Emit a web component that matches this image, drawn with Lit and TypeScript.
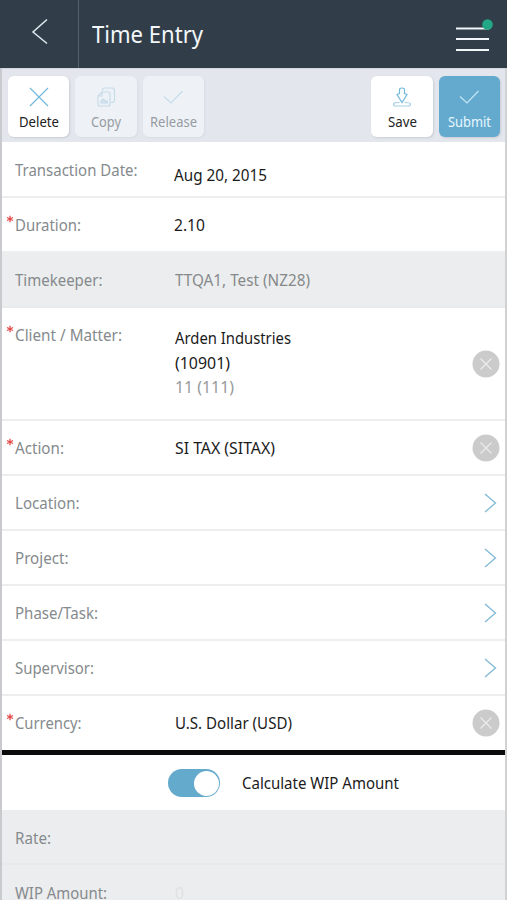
import { LitElement, html, svg, css, nothing } from "lit";
import { customElement, property } from "lit/decorators.js";

/** One line of text condensed or widened to a given width. */
@customElement("fit-text")
class FitText extends LitElement {
  @property({ type: Number }) w = 0;
  static styles = css`
    :host { display: block; white-space: nowrap; }
    .run { display: inline-block; transform-origin: 0 50%; }
  `;
  firstUpdated() {
    const run = this.renderRoot.querySelector(".run") as HTMLElement;
    const natural = run.getBoundingClientRect().width;
    if (natural && this.w) run.style.transform = `scaleX(${this.w / natural})`;
    this.style.width = `${this.w}px`;
  }
  render() {
    return html`<span class="run"><slot></slot></span>`;
  }
}

const cross = svg`<path d="M5 5 L23 23 M23 5 L5 23"/>`;
const check = svg`<path d="M5 13.500 L12 20 L23.500 8"/>`;
const copy = svg`<path d="M10.500 8 V6.500 Q10.500 5 12.500 5 H20 Q22.500 5 22.500 7.500 V17 Q22.500 19.500 20 19.500 H18.500"/><path d="M10 9 H16 Q18 9 18 11 V21 Q18 23 16 23 H8 Q6 23 6 21 V13 Z M10 9 V13 H6"/><path d="M9 20 V18 L11 16 L13 17.500 L15.500 18.500 V20 Z" fill="#d2e2ec"/>`;
const save = svg`<path d="M11.500 6.500 Q11.500 5 14 5 Q16.500 5 16.500 6.500 V10.500 L19 11.500 L14 19.500 L9 11.500 L11.500 10.500 Z"/><path d="M11.500 19.500 Q5.500 19.500 5.500 21.200 Q5.500 23 8 23 H20 Q22.500 23 22.500 21.200 Q22.500 19.500 16.500 19.500" stroke="#a3cfe6"/>`;

interface Tool { label: string; w: number; kind: string; icon: unknown; }
const left: Tool[] = [
  { label: "Delete", w: 40, kind: "", icon: cross },
  { label: "Copy", w: 30, kind: "off", icon: copy },
  { label: "Release", w: 47, kind: "off", icon: check },
];
const right: Tool[] = [
  { label: "Save", w: 29, kind: "", icon: save },
  { label: "Submit", w: 43, kind: "primary", icon: check },
];

interface Row {
  label: string; w: number; req?: boolean; kind?: string; end?: "clear" | "open";
  lines?: [string, number, string?][];
}
const rows: Row[] = [
  { label: "Transaction Date:", w: 122.5, kind: "first", lines: [["Aug 20, 2015", 93]] },
  { label: "Duration:", w: 66, req: true, kind: "duration", lines: [["2.10", 31]] },
  { label: "Timekeeper:", w: 87.5, kind: "shade", lines: [["TTQA1, Test (NZ28)", 135, "muted"]] },
  { label: "Client / Matter:", w: 107, req: true, kind: "client", end: "clear",
    lines: [["Arden Industries", 116], ["(10901)", 55], ["11 (111)", 59, "soft"]] },
  { label: "Action:", w: 49, req: true, end: "clear", lines: [["SI TAX (SITAX)", 100]] },
  { label: "Location:", w: 64.5, end: "open" },
  { label: "Project:", w: 53.5, end: "open" },
  { label: "Phase/Task:", w: 83, end: "open" },
  { label: "Supervisor:", w: 79, end: "open" },
  { label: "Currency:", w: 66.5, req: true, kind: "last", end: "clear", lines: [["U.S. Dollar (USD)", 117]] },
];
const totals: Row[] = [
  { label: "Rate:", w: 36, kind: "shade tail" },
  { label: "WIP Amount:", w: 92, kind: "shade tail", lines: [["0", 9, "ghost"]] },
];

@customElement("app-root")
class AppRoot extends LitElement {
  static styles = css`
    * { box-sizing: border-box; }
    :host {
      display: flex; flex-direction: column; height: 900px; overflow: hidden;
      font: 17px/24px "Noto Sans", "Open Sans", sans-serif; color: #1b1b1b; background: #fff;
    }
    svg { display: block; fill: none; }
    .header { flex: none; display: flex; height: 68px; background: #313e49; color: #f4f7f9; }
    .back { width: 79px; border-right: 1px solid #53616d; padding: 18px 0 0 31px; }
    .title { padding: 18px 0 0 12.5px; font-size: 23.5px; line-height: 32px; flex: 1; }
    .menu { padding: 17px 13px 0 0; }
    .body {
      flex: 1; min-height: 0; overflow: hidden;
      border-left: 2px solid #c9cace; border-right: 2px solid #d0d1d3;
    }
    .tools {
      display: flex; gap: 6px; height: 74px; padding: 6.5px 5px 0 6px;
      background: #e3e6ed; border-top: 1px solid #d3d7dd;
    }
    .spacer { flex: 1; }
    .tool {
      width: 61.3px; height: 61px; border-radius: 6px; background: #fff; color: #222;
      display: flex; flex-direction: column; align-items: center; padding-top: 7.5px;
      font-size: 14.3px; line-height: 20px; box-shadow: 1px 1px 2px #c9cdd6; stroke: #72b9dc;
    }
    .tool svg { width: 28px; height: 28px; margin-bottom: .5px; }
    .off { background: #eef2f6; color: #969ca2; stroke: #c6dce9; box-shadow: 1px 1px 2px #d9dde4; }
    .primary { background: #64aace; color: #e9f7ff; stroke: #c4e5f5; }
    .row {
      display: flex; height: 55px; padding: 15px 5px 0 4px; border-bottom: 2px solid #eeeeef;
    }
    .star { width: 8.5px; height: 24px; padding-top: 2px; stroke: #e34a4a; }
    .label { width: 160px; color: #858a8d; }
    .values { flex: 1; display: flex; flex-direction: column; }
    .end { margin-top: -2px; }
    .first { height: 56px; padding-top: 16px; }
    .first .values { padding-top: 5px; margin-left: -1px; }
    .duration .values { margin-left: -1px; }
    .shade { background: #ecedee; border-color: #e8e9ea; }
    .client { height: 113px; }
    .client .values { padding-top: 3px; line-height: 24.5px; }
    .client .end { margin-top: 27px; }
    .last { height: 54px; border-bottom: 0; }
    .tail { padding-top: 16px; }
    .muted { color: #85898b; }
    .soft { color: #96999b; }
    .ghost { color: #dfe2e3; }
    .divider { height: 5px; background: #0b0b0d; }
    .wip { display: flex; align-items: center; height: 55px; padding: 1px 0 0 166px; gap: 22px; }
    .switch {
      width: 52px; height: 28px; border-radius: 14px; background: #64aacd; padding: 1.5px;
      display: flex; justify-content: flex-end;
    }
    .knob { width: 25px; height: 25px; border-radius: 50%; background: #fff; }
  `;

  tool(t: Tool) {
    return html`<div class="tool ${t.kind}">
      <svg viewBox="0 0 28 28" stroke-width="1.2">${t.icon}</svg>
      <fit-text .w=${t.w}>${t.label}</fit-text>
    </div>`;
  }

  end(kind?: string) {
    if (kind === "clear")
      return html`<svg class="end" width="28" height="28" viewBox="0 0 28 28">
        <circle cx="14" cy="14" r="13.500" fill="#cbcbcb" />
        <path d="M8.500 8.500 L19.500 19.500 M19.500 8.500 L8.500 19.500" stroke="#ececec" stroke-width="1.200" />
      </svg>`;
    if (kind === "open")
      return html`<svg class="end" width="28" height="28" viewBox="0 0 28 28">
        <path d="M13 5 L23.500 14 L13 23" stroke="#7fbad6" stroke-width="1.300" />
      </svg>`;
    return nothing;
  }

  row(r: Row) {
    return html`<div class="row ${r.kind ?? ""}">
      <div class="star">
        ${r.req
          ? html`<svg width="8" height="8" viewBox="0 0 8 8">
              <path d="M4 .8 V7.200 M1 2.500 L7 5.500 M7 2.500 L1 5.500" stroke-width="1.300" />
            </svg>`
          : nothing}
      </div>
      <div class="label"><fit-text .w=${r.w}>${r.label}</fit-text></div>
      <div class="values">
        ${(r.lines ?? []).map(([text, w, tone]) => html`<fit-text class=${tone ?? ""} .w=${w}>${text}</fit-text>`)}
      </div>
      ${this.end(r.end)}
    </div>`;
  }

  render() {
    return html`
      <div class="header">
        <div class="back">
          <svg width="18" height="28" viewBox="0 0 18 28">
            <path d="M16 1.500 L2 14 L16 25.500" stroke="#e2e9ee" stroke-width="1.500" />
          </svg>
        </div>
        <div class="title"><fit-text .w=${111}>Time Entry</fit-text></div>
        <div class="menu">
          <svg width="38" height="36" viewBox="0 0 38 36">
            <path d="M0 11.500 H33 M0 22 H33 M0 33 H33" stroke="#f2f6f8" stroke-width="2" />
            <circle cx="31.500" cy="7.500" r="5.300" fill="#22a886" />
          </svg>
        </div>
      </div>
      <div class="body">
        <div class="tools">
          ${left.map((t) => this.tool(t))}
          <div class="spacer"></div>
          ${right.map((t) => this.tool(t))}
        </div>
        ${rows.map((r) => this.row(r))}
        <div class="divider"></div>
        <div class="wip">
          <div class="switch"><div class="knob"></div></div>
          <fit-text .w=${157}>Calculate WIP Amount</fit-text>
        </div>
        ${totals.map((r) => this.row(r))}
      </div>
    `;
  }
}
